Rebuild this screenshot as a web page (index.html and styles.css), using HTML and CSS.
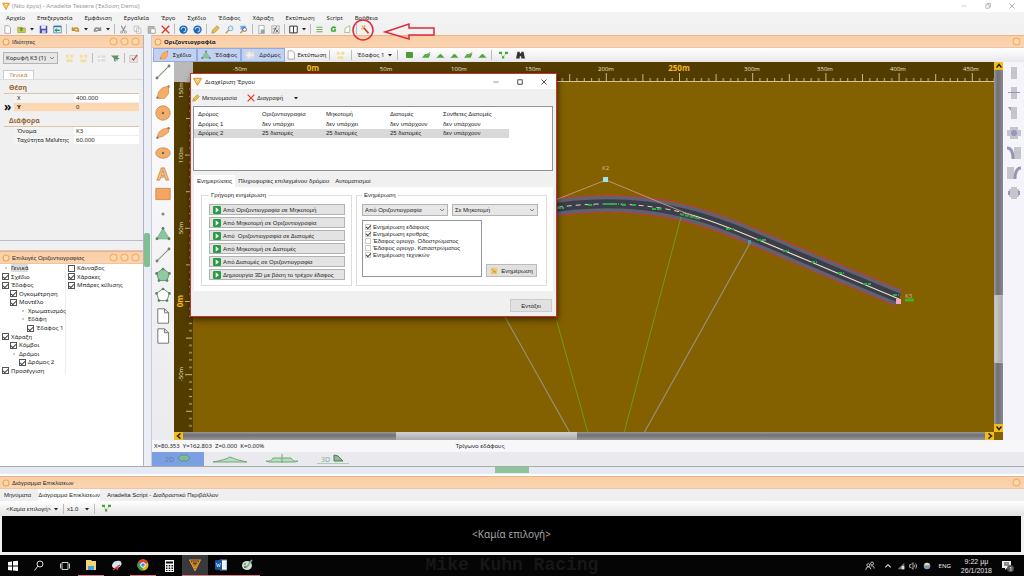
FILE: index.html
```html
<!DOCTYPE html>
<html lang="el">
<head>
<meta charset="utf-8">
<title>Anadelta Tessera</title>
<link rel="stylesheet" href="styles.css">
</head>
<body>
<svg class="defs" aria-hidden="true">
<symbol id="logo" viewBox="0 0 12 12"><path d="M1 2h10L6 11z" fill="#fff0d0" stroke="#eda03c" stroke-width="1.8" stroke-linejoin="round"/><path d="M3 3l3 3 3-3M6 6v4" stroke="#eda03c" fill="none"/></symbol>
<symbol id="doc" viewBox="0 0 12 12"><path d="M2.500 1h5L10 3.500V11h-7.500z" fill="#fff" stroke="#9a9a9a"/></symbol>
<symbol id="open" viewBox="0 0 12 12"><path d="M1 3h4l1 1h5v6H1z" fill="#d9c75c" stroke="#b09a38"/><path d="M4 8V4H2l4-3 4 3H8v4z" fill="#55a83c" transform="translate(1 2) scale(.8)"/></symbol>
<symbol id="save" viewBox="0 0 12 12"><path d="M1 1h10v10H1z" fill="#4c4fb4"/><path d="M3 1h6v4H3z" fill="#eef"/><path d="M4 7h5v4H4z" fill="#ccd"/></symbol>
<symbol id="import" viewBox="0 0 12 12"><path d="M1 1.500h10v9H1z" fill="#e6f2fb" stroke="#3978b0"/><path d="M1 1h10v2H1z" fill="#3978b0"/><path d="M9 6H5V4L2 7l3 3V8h4z" fill="#30984c"/></symbol>
<symbol id="undo" viewBox="0 0 12 12"><path d="M2 3v4h4M2.500 6.500C5 3 10 3 10 8H6" fill="none" stroke="#c79130" stroke-width="2"/></symbol>
<symbol id="redo" viewBox="0 0 12 12"><path d="M10 3v4H6M9.500 6.500C7 3 2 3 2 8h4" fill="none" stroke="#8d8d8d" stroke-width="2"/></symbol>
<symbol id="cut" viewBox="0 0 12 12"><path d="M3 1l4 7M9 1L5 8" stroke="#888" stroke-width="1.400"/><circle cx="3.500" cy="9.500" r="1.500" fill="none" stroke="#888"/><circle cx="8.500" cy="9.500" r="1.500" fill="none" stroke="#888"/></symbol>
<symbol id="copy" viewBox="0 0 12 12"><path d="M1.500 1.500h6v7h-6zM4.500 4h6v7h-6z" fill="#f8f8f8" stroke="#b5b5b5"/></symbol>
<symbol id="paste" viewBox="0 0 12 12"><path d="M1.500 2h8v9h-8z" fill="#b9b9b9" stroke="#999"/><path d="M5 5h6v6H5z" fill="#fff" stroke="#999"/></symbol>
<symbol id="del" viewBox="0 0 12 12"><path d="M1 1l10 10M11 1L1 11" stroke="#e03428" stroke-width="1.800"/></symbol>
<symbol id="sphere" viewBox="0 0 12 12"><circle cx="6" cy="6" r="5.500" fill="#1c66b4"/><path d="M3 6a3 3 0 1 1 3 3" fill="none" stroke="#a6d3f8" stroke-width="1.500"/></symbol>
<symbol id="pencil" viewBox="0 0 12 12"><path d="M1 11l1-4 6-6 3 3-6 6z" fill="#e9bd48" stroke="#a5822f" stroke-width=".8"/></symbol>
<symbol id="lens" viewBox="0 0 12 12"><path d="M6 6l-5 5" stroke="#d79545" stroke-width="2"/><circle cx="7.500" cy="4.500" r="3.200" fill="#d7ecfb" stroke="#5e9ecb"/></symbol>
<symbol id="flag" viewBox="0 0 12 12"><path d="M2 1h7v5H2z" fill="#6fa7dd"/><path d="M6 6l-4 5" stroke="#d79545" stroke-width="2"/><circle cx="7.500" cy="6" r="2.500" fill="#dff" stroke="#447"/></symbol>
<symbol id="save2" viewBox="0 0 12 12"><path d="M2.500.5h7v11h-7z" fill="#fff" stroke="#999"/><path d="M5 6h5v5H5z" fill="#8aa"/></symbol>
<symbol id="fx" viewBox="0 0 12 12"><path d="M1 1h10v10H1z" fill="#e6e6e6" stroke="#aaa"/><path d="M3 10c2 0 2-7 5-8M3 5h4M6 6l4 4M10 6l-4 4" fill="none" stroke="#555"/></symbol>
<symbol id="cols" viewBox="0 0 12 12"><path d="M1 1.500h10v9H1zM6 1.500v9" fill="#fff" stroke="#333" stroke-width="1.300"/></symbol>
<symbol id="list" viewBox="0 0 12 12"><path d="M2 3h8M2 6h8M2 9h8" stroke="#69a854" stroke-width="1.600"/></symbol>
<symbol id="refresh" viewBox="0 0 12 12"><path d="M1 1h10v10H1z" fill="#e7f2e0"/><path d="M9 4C5 1 2 5 4 8h4V5" stroke="#45a43a" fill="none" stroke-width="2"/></symbol>
<symbol id="page" viewBox="0 0 12 12"><path d="M3 4l6-3v9H2z" fill="#f5fff0" stroke="#8cba7c"/></symbol>
<symbol id="wand" viewBox="0 0 12 12"><path d="M3 3l7 8" stroke="#c5472e" stroke-width="2.500"/><path d="M1 1l3 3M5 0v3M0 5h3" stroke="#efa83f" stroke-width="1.500"/></symbol>
<symbol id="ring" viewBox="0 0 12 12"><circle cx="6" cy="6" r="4.500" fill="#fbdcae" stroke="#f0a356" stroke-width="1.600"/></symbol>
<symbol id="tri" viewBox="0 0 20 20"><path d="M10 3L2 16h16z" fill="#8bc79a" stroke="#72a981"/><g fill="#5f8066"><circle cx="10" cy="3" r="1.800"/><circle cx="2.500" cy="16" r="1.800"/><circle cx="17.500" cy="16" r="1.800"/></g></symbol>
<symbol id="quarter" viewBox="0 0 20 20"><path d="M3 18C3 8 9 3 17 3v9l-5 6z" fill="#f5ad67" stroke="#d98e48"/><g fill="#8a8378"><circle cx="3" cy="17" r="1.500"/><circle cx="17" cy="3" r="1.500"/></g></symbol>
<symbol id="arc" viewBox="0 0 20 20"><path d="M3 16C3 8 9 4 17 4v5L10 14z" fill="#f5ad67" stroke="#d98e48"/><g fill="#8a8378"><circle cx="3" cy="16" r="1.500"/><circle cx="17" cy="4" r="1.500"/></g></symbol>
<symbol id="line" viewBox="0 0 20 20"><path d="M2 18L18 2" stroke="#7e9a78" stroke-width="1.300"/><g fill="#727d6e"><circle cx="2.500" cy="17.500" r="1.800"/><circle cx="17.500" cy="2.500" r="1.800"/></g></symbol>
<symbol id="penta" viewBox="0 0 20 20"><path d="M10 2l8 6-3 9H5L2 8z" stroke="#6a8d70" stroke-width="1.200"/><g fill="#5f8066"><circle cx="10" cy="2.500" r="1.700"/><circle cx="18" cy="8" r="1.700"/><circle cx="15" cy="17" r="1.700"/><circle cx="5" cy="17" r="1.700"/><circle cx="2" cy="8" r="1.700"/></g></symbol>
<symbol id="sheet" viewBox="0 0 20 20"><path d="M3.500 1h8.500L17 6V19H3.500zM12 1v5h5" fill="#fff" stroke="#727272" stroke-width="1.200"/></symbol>
<symbol id="hill" viewBox="0 0 12 12"><path d="M0 9c3-1 4-5 6-5s3 4 6 5z" fill="#54a23e"/></symbol>
<symbol id="hill2" viewBox="0 0 12 12"><path d="M0 9l4-5h7L9 9z" fill="#58a842"/><path d="M5 6l6-4" stroke="#7ab662" stroke-width="1.500"/></symbol>
<symbol id="dots" viewBox="0 0 12 12"><path d="M2 2l3 6 5-5" fill="none" stroke="#8ac57b"/><g fill="#4da23f"><path d="M0 1h4v3H0zM4 7h3v3H4zM8 1h4v3H8z"/></g></symbol>
<symbol id="binoc" viewBox="0 0 12 12"><path d="M2 1h3v2h2V1h3l2 9H7V7H5v3H0z" fill="#333"/></symbol>
<symbol id="play" viewBox="0 0 12 12"><rect width="12" height="12" rx="2" fill="#259b43"/><path d="M4 2v8l5-4z" fill="#fff"/></symbol>
<symbol id="sun" viewBox="0 0 12 12"><path d="M1 1h4v4H1zM7 1h4v4H7zM2 7h8v4H2z" fill="#f3dfa2"/></symbol>
<symbol id="grid" viewBox="0 0 12 12"><path d="M1 2h10v8H1z" fill="#dcdcdc"/><path d="M1 6h10M5 2v8" stroke="#fff"/></symbol>
<symbol id="filter" viewBox="0 0 12 12"><path d="M0 2h11L6 7v4L4 9V6z" fill="#758575"/><path d="M5 6h6M8 3v6" stroke="#34a04a" stroke-width="1.500"/></symbol>
<symbol id="check" viewBox="0 0 12 12"><path d="M1 2h10v9H1z" fill="#e9e9e9" stroke="#bbb"/><path d="M4 6l2 2 5-7" stroke="#cb4c42" fill="none" stroke-width="1.600"/></symbol>
<symbol id="chev" viewBox="0 0 12 12"><path d="M2 4l4 4 4-4" fill="none" stroke="#666" stroke-width="1.500"/></symbol>
<symbol id="caret" viewBox="0 0 12 12"><path d="M2 4h8L6 9z" fill="#222"/></symbol>
<symbol id="mini" viewBox="0 0 12 12"><path d="M1 6h10" stroke="currentColor"/></symbol>
<symbol id="max" viewBox="0 0 12 12"><path d="M1.500 1.500h9v9h-9z" fill="none" stroke="currentColor" stroke-width="1.600"/></symbol>
<symbol id="restore" viewBox="0 0 12 12"><path d="M1.500 3.500h7v7h-7zM4 3V1h7v7H9" fill="none" stroke="currentColor" stroke-width="1.300"/></symbol>
<symbol id="x" viewBox="0 0 12 12"><path d="M1 1l10 10M11 1L1 11" stroke="currentColor" stroke-width="1.600"/></symbol>
</svg>

<header class="titlebar"><svg class="i8"><use href="#logo"/></svg><span>(Νέο έργο) - Anadelta Tessera (Έκδοση Demo)</span>
<div class="winbtns"><button aria-label="Ελαχιστοποίηση"><svg class="i6"><use href="#mini"/></svg></button><button aria-label="Επαναφορά"><svg class="i6"><use href="#restore"/></svg></button><button aria-label="Κλείσιμο"><svg class="i6"><use href="#x"/></svg></button></div></header>
<nav class="menubar"><button>Αρχείο</button><button>Επεξεργασία</button><button>Εμφάνιση</button><button>Εργαλεία</button><button>Έργο</button><button>Σχέδιο</button><button>Έδαφος</button><button>Χάραξη</button><button>Εκτύπωση</button><button>Script</button><button>Βοήθεια</button></nav>
<div class="toolbar">
<button class="t" aria-label="Νέο"><svg class="i9"><use href="#doc"/></svg></button><button class="t" aria-label="Άνοιγμα"><svg class="i9"><use href="#open"/></svg></button><button class="c" aria-label="Πρόσφατα"><svg class="i6"><use href="#caret"/></svg></button><button class="t" aria-label="Αποθήκευση"><svg class="i9"><use href="#save"/></svg></button><button class="t" aria-label="Εισαγωγή"><svg class="i9"><use href="#import"/></svg></button><i class="s"></i>
<button class="t" aria-label="Αναίρεση"><svg class="i9"><use href="#undo"/></svg></button><button class="c" aria-label="Λίστα αναίρεσης"><svg class="i6"><use href="#caret"/></svg></button><button class="t" aria-label="Επανάληψη"><svg class="i9"><use href="#redo"/></svg></button><button class="c" aria-label="Λίστα επανάληψης"><svg class="i6"><use href="#caret"/></svg></button><i class="s"></i>
<button class="t" aria-label="Αποκοπή"><svg class="i9"><use href="#cut"/></svg></button><button class="t" aria-label="Αντιγραφή"><svg class="i9"><use href="#copy"/></svg></button><button class="t" aria-label="Επικόλληση"><svg class="i9"><use href="#paste"/></svg></button><button class="t" aria-label="Διαγραφή"><svg class="i9"><use href="#del"/></svg></button><i class="s"></i>
<button class="t" aria-label="Προηγούμενο"><svg class="i9"><use href="#sphere"/></svg></button><button class="t" aria-label="Επόμενο"><svg class="i9"><use href="#sphere"/></svg></button><i class="s"></i>
<button class="t" aria-label="Μολύβι"><svg class="i9"><use href="#pencil"/></svg></button><button class="t" aria-label="Εστίαση"><svg class="i9"><use href="#lens"/></svg></button><button class="t" aria-label="Εστίαση παραθύρου"><svg class="i9"><use href="#flag"/></svg></button><i class="s"></i>
<button class="t" aria-label="Έγγραφο"><svg class="i9"><use href="#save2"/></svg></button><button class="t" aria-label="Συναρτήσεις"><svg class="i9"><use href="#fx"/></svg></button><i class="s"></i>
<button class="t" aria-label="Παράθυρα"><svg class="i9"><use href="#cols"/></svg></button><button class="c" aria-label="Διάταξη"><svg class="i6"><use href="#caret"/></svg></button><i class="s"></i>
<button class="t" aria-label="Λίστα"><svg class="i9"><use href="#list"/></svg></button><button class="t" aria-label="Ανανέωση"><svg class="i9"><use href="#refresh"/></svg></button><button class="t" aria-label="Σελίδα"><svg class="i9"><use href="#page"/></svg></button><i class="s"></i><button class="t" aria-label="Διαχείριση έργου"><svg class="i9"><use href="#wand"/></svg></button>
<svg class="callout" aria-hidden="true"><circle cx="11" cy="11" r="10"/><path d="M33 13l24-8v4h25v7H57v4z"/></svg>
</div>

<main class="main">
<aside class="left">
<section class="props">
<h2 class="bar"><svg class="i8"><use href="#ring"/></svg>Ιδιότητες<span class="rings"><svg class="i9"><use href="#ring"/></svg><svg class="i9"><use href="#ring"/></svg><svg class="i9"><use href="#ring"/></svg></span></h2>
<div class="proptools"><span class="sel sel-obj"><select aria-label="Αντικείμενο"><option>Κορυφή K3 (1)</option></select><svg class="i6"><use href="#chev"/></svg></span>
<button class="t" aria-label="Κατηγορίες"><svg class="i9"><use href="#sun"/></svg></button><button class="t" aria-label="Ταξινόμηση"><svg class="i9"><use href="#sun"/></svg></button><i class="s"></i><button class="t" aria-label="Πίνακας"><svg class="i9"><use href="#grid"/></svg></button><button class="t" aria-label="Φίλτρο"><svg class="i9"><use href="#filter"/></svg></button><i class="s"></i><button class="t" aria-label="Έλεγχος"><svg class="i9"><use href="#check"/></svg></button></div>
<div class="ptabs"><button>Γενικά</button></div>
<h3>Θέση</h3>
<dl><div><dt>X</dt><dd>400.000</dd></div><div class="cur"><dt><b>Y</b></dt><dd>0</dd></div></dl>
<h3>Διάφορα</h3>
<dl><div><dt>Όνομα</dt><dd>K3</dd></div><div><dt>Ταχύτητα Μελέτης</dt><dd>60.000</dd></div></dl>
</section>
<section class="opts">
<h2 class="bar"><svg class="i8"><use href="#ring"/></svg>Επιλογές Οριζοντιογραφίας<span class="rings"><svg class="i9"><use href="#ring"/></svg><svg class="i9"><use href="#ring"/></svg><svg class="i9"><use href="#ring"/></svg></span></h2>
<div class="trees">
<div class="tree">
<span class="leaf"><mark>Γενικά</mark></span>
<label><input type="checkbox" checked>Σχέδιο</label>
<label><input type="checkbox" checked>Έδαφος</label>
<label class="l1"><input type="checkbox" checked>Ογκομέτρηση</label>
<label class="l1"><input type="checkbox" checked>Μοντέλο</label>
<span class="leaf l2">Χρωματισμός</span>
<span class="leaf l2">Εδάφη</span>
<label class="l3"><input type="checkbox" checked>Έδαφος 1</label>
<label><input type="checkbox" checked>Χάραξη</label>
<label class="l1"><input type="checkbox" checked>Κόμβοι</label>
<span class="leaf l1">Δρόμοι</span>
<label class="l2"><input type="checkbox" checked>Δρόμος 2</label>
<label><input type="checkbox" checked>Προσέγγιση</label>
</div>
<div class="tree tree2">
<label><input type="checkbox">Κάνναβος</label>
<label><input type="checkbox" checked>Χάρακες</label>
<label><input type="checkbox" checked>Μπάρες κύλισης</label>
</div>
</div>
</section>
</aside>
<div class="vsplit"><i></i></div>
<section class="work">
<h2 class="bar"><svg class="i8"><use href="#ring"/></svg><b>Οριζοντιογραφία</b><span class="rings"><svg class="i9"><use href="#ring"/></svg></span></h2>
<div class="worktools">
<button class="mode"><svg class="i10"><use href="#quarter"/></svg>Σχέδιο</button><button class="mode"><svg class="i10"><use href="#tri"/></svg>Έδαφος</button><button class="mode"><svg class="i10"><use href="#grid"/></svg>Δρόμος</button>
<button class="print"><svg class="i10"><use href="#doc"/></svg>Εκτύπωση</button><i class="s"></i><button class="t wide" aria-label="Εικόνα"><svg class="i9"><use href="#sun"/></svg></button><i class="s"></i>
<span class="sel flat sel-ground"><select aria-label="Έδαφος"><option>Έδαφος 1</option></select><svg class="i6"><use href="#caret"/></svg></span><i class="s"></i>
<button class="t wide2" aria-label="Κύβος"><svg class="i8"><rect x="1" y="1" width="7" height="6" rx="1" fill="#4f9a38"/></svg></button><button class="t" aria-label="Νέο έδαφος"><svg class="i9"><use href="#hill2"/></svg></button><button class="t" aria-label="Ισοϋψείς"><svg class="i9"><use href="#hill"/></svg></button><button class="t" aria-label="Πρανές"><svg class="i9"><use href="#hill"/></svg></button><button class="t" aria-label="Επεξεργασία εδάφους"><svg class="i9"><use href="#hill2"/></svg></button><button class="t" aria-label="Κορυφή"><svg class="i9"><use href="#hill"/></svg></button><i class="s"></i>
<button class="t wide2" aria-label="Τριγωνισμός"><svg class="i9"><use href="#dots"/></svg></button><button class="t" aria-label="Εύρεση"><svg class="i9"><use href="#binoc"/></svg></button>
</div>
<div class="stage">
<div class="palette">
<button aria-label="Γραμμή"><svg class="i16"><use href="#line"/></svg></button>
<button aria-label="Τόξο"><svg class="i16"><use href="#quarter"/></svg></button>
<button aria-label="Κύκλος"><svg class="i16" viewBox="0 0 20 20"><circle cx="10" cy="10" r="9" fill="#f5ad67" stroke="#b58a5c"/><circle cx="10" cy="10" r="1.500" fill="#666"/></svg></button>
<button aria-label="Ελλειπτικό τόξο"><svg class="i16"><use href="#arc"/></svg></button>
<button aria-label="Έλλειψη"><svg class="i16" viewBox="0 0 20 20"><ellipse cx="10" cy="10" rx="9" ry="6.500" fill="#f5ad67" stroke="#b58a5c"/><circle cx="10" cy="10" r="1.500" fill="#666"/></svg></button>
<button aria-label="Κείμενο"><svg class="a20"><text x="10" y="16" class="glyph">A</text></svg></button>
<button aria-label="Ορθογώνιο"><svg class="i16" viewBox="0 0 20 20"><path d="M1 3h18v14H1z" fill="#f5a560" stroke="#c4844a"/></svg></button>
<button aria-label="Σημείο"><svg class="i16" viewBox="0 0 20 20"><circle cx="10" cy="10" r="2" fill="#74957b"/></svg></button>
<button aria-label="Τρίγωνο"><svg class="i16"><use href="#tri"/></svg></button>
<button aria-label="Ευθεία"><svg class="i16"><use href="#line"/></svg></button>
<button aria-label="Πολύγωνο"><svg class="i16" fill="#8fcb9e"><use href="#penta"/></svg></button>
<button aria-label="Περίγραμμα"><svg class="i16" fill="#fff"><use href="#penta"/></svg></button>
<button aria-label="Φύλλο"><svg class="i16"><use href="#sheet"/></svg></button>
<button aria-label="Νέο φύλλο"><svg class="i16"><use href="#sheet"/></svg></button>
</div>
<div class="view">
<svg class="plan" role="img" aria-label="Οριζοντιογραφία δρόμου">
<defs>
<pattern id="hticks" x="139" y="0" width="73.2" height="20" patternUnits="userSpaceOnUse"><path d="M.5 11v8M37.100 12v7M7.800 16v3M15.100 16v3M22.400 16v3M29.700 16v3M44.400 16v3M51.700 16v3M59 16v3M66.400 16v3" stroke="#d9c69b" stroke-width=".9"/></pattern>
<pattern id="vticks" x="0" y="239" width="19" height="73.2" patternUnits="userSpaceOnUse"><path d="M11 .5h8M12 37.100h7M15 7.800h4M15 15.100h4M15 22.400h4M15 29.700h4M15 44.400h4M15 51.700h4M15 59h4M15 66.400h4" stroke="#d9c69b" stroke-width=".9"/></pattern>
<path id="axis" d="M540 210C590 201 640 202 685 213S760 241 899 298"/>
</defs>
<rect width="100%" height="20" fill="#523c00"/><rect width="100%" height="19" fill="url(#hticks)"/><path d="M0 19.500h2000" stroke="#d9c69b"/>
<rect y="20" width="19" height="100%" fill="#523c00"/><rect y="20" width="18" height="100%" fill="url(#vticks)"/>
<rect width="19" height="20" fill="#b9b9b9"/>
<g class="rl"><text x="66" y="9">-50m</text><text x="139" y="9" class="big">0m</text><text x="212" y="9">50m</text><text x="285" y="9">100m</text><text x="359" y="9">150m</text><text x="432" y="9">200m</text><text x="505" y="9" class="big">250m</text><text x="578" y="9">300m</text><text x="651" y="9">350m</text><text x="724" y="9">400m</text><text x="797" y="9">450m</text></g>
<g class="rl"><text transform="translate(9 28) rotate(-90)">150m</text><text transform="translate(9 93) rotate(-90)">100m</text><text transform="translate(9 166) rotate(-90)">50m</text><text class="big" transform="translate(9 239) rotate(-90)">0m</text><text transform="translate(9 312) rotate(-90)">-50m</text></g>
<g transform="translate(-174 -62)" fill="none">
<use href="#axis" class="edge"/><use href="#axis" class="asphalt"/><use href="#axis" class="lane"/>
<path d="M505 317L570 433M750 243L644 433" stroke="#94907a" stroke-width="1.200"/>
<path d="M557 322L588 433M681 217L624 433" stroke="#709b13"/>
<path d="M540 210C590 201 640 202 685 213" stroke="#d8d3cf" stroke-dasharray="5 4"/><path d="M685 213C728 225 760 241 899 299" stroke="#eee2c4" stroke-width="1.200"/>
<path d="M540 206L606 180L700 219" stroke="#c39375"/>
<path d="M557 208h7M588 205h6M603 204h16M622 205h4M632 205h5M652 209h10M680 214l20 5M726 229h8M757 240h10M783 251h6M811 262h6M838 273h6M863 284h8M893 295h6" stroke="#29ad48" stroke-width="2" stroke-dasharray="4 1"/>
<path d="M603 177h5v5h-5z" fill="#9ee4ec"/><path d="M748 240h3v4h-3z" fill="#4a9aa0"/><path d="M896 299h5v5h-5z" fill="#f0a8cc"/><path d="M905 300h9" stroke="#3eb326" stroke-width="3"/>
<text x="602" y="170" class="pt">K2</text><text x="905" y="298" class="pt">K3</text>
</g>
</svg>
<div class="vscroll"><button aria-label="Πάνω"><svg class="i6" viewBox="0 0 12 12"><path d="M1 9l5-6 5 6"/></svg></button><i></i><button aria-label="Κάτω"><svg class="i6" viewBox="0 0 12 12"><path d="M1 3l5 6 5-6"/></svg></button></div>
<div class="hscroll"><button aria-label="Αριστερά"><svg class="i6" viewBox="0 0 12 12"><path d="M9 1L3 6l6 5"/></svg></button><i></i><button aria-label="Δεξιά"><svg class="i6" viewBox="0 0 12 12"><path d="M3 1l6 5-6 5"/></svg></button></div>
</div>
<div class="rightstrip">
<button aria-label="Όψη"><svg class="i14"><path d="M4 1h6v12H4z"/></svg></button>
<button aria-label="Τομή"><svg class="i14"><path d="M4 1h6v12H4z"/><path class="p" d="M1 6h12v1H1z"/></svg></button>
<button aria-label="Άκρο"><svg class="i14"><path d="M4 1h6v12H4z"/><path class="p" d="M1 1h3v4z"/></svg></button>
<button aria-label="Κέντρο"><svg class="i14"><path d="M3 1h8v12H3zM0 4h14v6H0z"/><circle class="p" cx="7" cy="7" r="3"/></svg></button>
<button aria-label="Στροφή αριστερά"><svg class="i14"><path d="M7 1h7v12H7z"/><path class="q" d="M0 2q6 0 6 11"/></svg></button>
<button aria-label="Στροφή δεξιά"><svg class="i14"><path d="M0 1h7v12H0z"/><path class="q" d="M14 2q-6 0-6 11"/></svg></button>
<button aria-label="Πλάτος"><svg class="i14"><path d="M4 1h6v12H4zM2 3h10v8H2z"/><path class="p" d="M1 5h2v4H1zM11 5h2v4h-2z"/></svg></button>
</div>
</div>
<div class="status"><span>X=80.353&nbsp; Y=162.803&nbsp; Z=0.000&nbsp; K=0.00%</span><span class="msg">Τρίγωνο εδάφους</span></div>
<div class="views">
<button class="on" aria-label="2D"><svg><text x="12" y="9">2D</text><path d="M25 5l3-3h6l3 3-3 3h-6z" fill="#7fb79a" stroke="#63938a"/></svg></button>
<button aria-label="Μηκοτομή"><svg><path d="M8 9q12-2 17-5q6 3 17 5z" fill="#b6dfbd" stroke="#75a77c"/></svg></button>
<button aria-label="Διατομή"><svg><path d="M9 8q5 1 7-3h18q2 4 7 3l-3 1H12z" fill="#b6dfbd" stroke="#75a77c"/><path d="M25 1v9" stroke="#75a77c"/></svg></button>
<button aria-label="3D"><svg><text x="12" y="9">3D</text><path d="M25 8V2l4 1 5 5z" fill="#8cba94" stroke="#56725a"/><path d="M8 10.500h32" stroke="#a9d0af"/></svg></button>
</div>
</section>
</main>

<div class="hsplit"><i></i></div>
<h2 class="bar dockbar"><svg class="i8"><use href="#ring"/></svg>Διάγραμμα Επικλίσεων<span class="rings"><svg class="i9"><use href="#ring"/></svg></span></h2>
<div class="docktabs"><button>Μηνύματα</button><button class="on">Διάγραμμα Επικλίσεων</button><button>Anadelta Script - Διαδραστικό Περιβάλλον</button></div>
<div class="docktools"><span class="sel flat sel-none"><select aria-label="Επιλογή"><option>&lt;Καμία επιλογή&gt;</option></select><svg class="i6"><use href="#caret"/></svg></span><i class="s"></i><span class="sel flat sel-x"><select aria-label="Κλίμακα"><option>x1.0</option></select><svg class="i6"><use href="#caret"/></svg></span><i class="s"></i><button class="t wide2" aria-label="Σημεία"><svg class="i9"><use href="#dots"/></svg></button></div>
<div class="diagram">&lt;Καμία επιλογή&gt;</div>
<footer class="taskbar">
<span class="wall">Mike Kuhn Racing</span>
<button aria-label="Έναρξη"><svg class="i12"><path d="M1 2l4-.5V5.500H1zM6 1.300L11 .8v4.700H6zM1 6.500h4v4L1 10zM6 6.500h5V11l-5-.5z" fill="#fff"/></svg></button>
<button aria-label="Αναζήτηση"><svg class="i12"><circle cx="7" cy="4" r="3" fill="none" stroke="#ddd"/><path d="M5 6L1.500 10.500" stroke="#ddd"/></svg></button>
<button aria-label="Προβολή εργασιών"><svg class="i12"><path d="M3 2.500h6v7H3zM1.500 3.500v5M10.500 3.500v5" fill="none" stroke="#ccc"/></svg></button>
<button class="run" aria-label="Εξερεύνηση"><svg class="i12"><path d="M1 1h5l1 1h4v9H1z" fill="#f2d675"/><path d="M3 7h6v4H3z" fill="#46a2dd"/></svg></button>
<button aria-label="Αποκόμματα"><svg class="i12"><ellipse cx="6" cy="4.500" rx="5" ry="3.500" fill="#d9e1f0" transform="rotate(-25 6 5)"/><path d="M2 10l7-5M6 10l1-4" stroke="#d4453c" stroke-width="1.500"/></svg></button>
<button class="run" aria-label="Chrome"><svg class="i12"><circle cx="6" cy="6" r="5.500" fill="#e3b61c"/><path d="M1 3.500A5.500 5.500 0 0 1 11 3.500L6 6z" fill="#dc4437"/><path d="M1 3.500A5.500 5.500 0 0 0 5 11.500L7 6z" fill="#35a353"/><circle cx="6" cy="6" r="2.300" fill="#438af0" stroke="#fff"/></svg></button>
<button aria-label="Αριθμομηχανή"><svg class="i12"><path d="M2 0h9v12H2z" fill="#f5f5f5"/><path d="M3 1.500h7v2H3zM3 5h1.500v1.500H3zM5.700 5h1.500v1.500H5.700zM8.500 5H10v1.500H8.500zM3 7.500h1.500V9H3zM5.700 7.500h1.500V9H5.700zM8.500 7.500H10V9H8.500zM3 10h1.500v1H3zM5.700 10h1.500v1H5.700zM8.500 10H10v1H8.500z" fill="#111"/></svg></button>
<button class="run active" aria-label="Tessera"><svg class="i12" viewBox="0 0 12 12"><path d="M.7 1h10.600L6 11.500z" fill="#52310c" stroke="#e39a3a" stroke-width="1.200"/><path d="M3 3h6L6 9zM6 5v4" fill="none" stroke="#e39a3a"/></svg></button>
<button class="run" aria-label="Word"><svg class="i12"><path d="M5 1h7v10H5z" fill="#fff" stroke="#5b8bd0"/><path d="M0 1.500L7 .5v11L0 10.500z" fill="#1d55a5"/><path d="M1.500 4l1 4 1-3 1 3 1-4M8 4h3M8 6h3M8 8h3" stroke="#cfe0f7" fill="none" stroke-width=".8"/></svg></button>
<button class="run" aria-label="Ζωγραφική"><svg class="i12"><ellipse cx="6" cy="6.500" rx="5" ry="4.500" fill="#d7ddcf"/><path d="M5 9l6-8" stroke="#6fb1a0" stroke-width="1.500"/><circle cx="4" cy="5" r="1" fill="#5a9e5d"/><circle cx="4" cy="8" r="1" fill="#555"/></svg></button>
<div class="tray">
<svg class="i10" viewBox="0 0 12 12" fill="none" stroke="#ddd"><circle cx="4" cy="5" r="1.800"/><circle cx="8.500" cy="3" r="1.800"/><path d="M1 11q0-4 3-4t3 3M7 6q4-1 4 3"/></svg>
<svg class="i8 up" viewBox="0 0 12 12" fill="none" stroke="#eee" stroke-width="1.600"><path d="M2 8l4-4 4 4"/></svg>
<svg class="i8" viewBox="0 0 12 12"><path d="M1 11L11 1v10z" fill="#777"/><path d="M7 6h4v5H7z" fill="#ddd"/></svg>
<svg class="i8" viewBox="0 0 12 12" fill="none" stroke="#eee"><path d="M1 4h2l3-3v10L3 8H1zM8 4q2 2 0 4M10 2q3 4 0 8"/></svg>
<svg class="i8 orb" viewBox="0 0 12 12"><circle cx="6" cy="6" r="5" fill="#8097bd"/><path d="M2 5a4 4 0 0 1 8 0z" fill="#f2dc88"/></svg>
<span class="lang">ENG</span><time>9:22 μμ<br>26/1/2018</time>
<svg class="i12 note"><path d="M0 1h9v7H5L3 10V8H0z" fill="#eee"/><path d="M2 3h5M2 5h5" stroke="#333"/><circle cx="8.500" cy="8.500" r="3.500" fill="#555"/><text x="7" y="11">1</text></svg>
</div>
</footer>

<div class="dialog" role="dialog" aria-labelledby="dlg">
<div class="dtitle"><svg class="i9"><use href="#logo"/></svg><span id="dlg">Διαχείριση Έργου</span><div class="winbtns"><button aria-label="Ελαχιστοποίηση"><svg class="i6"><use href="#mini"/></svg></button><button aria-label="Μεγιστοποίηση"><svg class="i6"><use href="#max"/></svg></button><button aria-label="Κλείσιμο"><svg class="i6"><use href="#x"/></svg></button></div></div>
<div class="dtools"><button><svg class="i8"><use href="#pencil"/></svg>Μετονομασία</button><button><svg class="i8"><use href="#del"/></svg>Διαγραφή</button><button aria-label="Περισσότερα"><svg class="i6"><use href="#caret"/></svg></button></div>
<div class="roads"><table>
<colgroup><col class="w64"><col class="w64"><col class="w64"><col class="w53"><col></colgroup>
<thead><tr><th>Δρόμος</th><th>Οριζοντιογραφία</th><th>Μηκοτομή</th><th>Διατομές</th><th>Σύνθετες Διατομές</th></tr></thead>
<tbody><tr><td>Δρόμος 1</td><td>δεν υπάρχει</td><td>δεν υπάρχει</td><td>δεν υπάρχουν</td><td>δεν υπάρχουν</td></tr>
<tr class="hit"><td>Δρόμος 2</td><td>25 διατομές</td><td>25 διατομές</td><td>25 διατομές</td><td>δεν υπάρχουν</td></tr></tbody></table></div>
<div class="dtabs"><button class="on">Ενημερώσεις</button><button>Πληροφορίες επιλεγμένου δρόμου</button><button>Αυτοματισμοί</button></div>
<div class="dpage">
<fieldset class="quick"><legend>Γρήγορη ενημέρωση</legend>
<div class="stack">
<button><svg class="i8"><use href="#play"/></svg>Από Οριζοντιογραφία σε Μηκοτομή</button>
<button><svg class="i8"><use href="#play"/></svg>Από Μηκοτομή σε Οριζοντιογραφία</button>
<button><svg class="i8"><use href="#play"/></svg>Από&nbsp; Οριζοντιογραφία σε Διατομές</button>
<button><svg class="i8"><use href="#play"/></svg>Από Μηκοτομή σε Διατομές</button>
<button><svg class="i8"><use href="#play"/></svg>Από Διατομές σε Οριζοντιογραφία</button>
<button><svg class="i8"><use href="#play"/></svg>Δημιουργία 3D με βάση το τρέχον έδαφος</button>
</div>
</fieldset>
<fieldset class="upd"><legend>Ενημέρωση</legend>
<div class="row"><span class="sel gray"><select aria-label="Από"><option>Από Οριζοντιογραφία</option></select><svg class="i6"><use href="#chev"/></svg></span><span class="sel gray"><select aria-label="Σε"><option>Σε Μηκοτομή</option></select><svg class="i6"><use href="#chev"/></svg></span></div>
<div class="row end"><div class="checks">
<label><input type="checkbox" checked>Ενημέρωση εδάφους</label>
<label><input type="checkbox" checked>Ενημέρωση ερυθράς</label>
<label><input type="checkbox">Έδαφος οριογρ. Οδοστρώματος</label>
<label><input type="checkbox">Έδαφος οριογρ. Καταστρώματος</label>
<label><input type="checkbox" checked>Ενημέρωση τεχνικών</label>
</div><button class="go"><svg class="i8" viewBox="0 0 12 12"><path d="M1 1h10v10H1z" fill="#f1cb72"/><path d="M3 3l6 6M4 8l5-2" stroke="#b97d1f"/></svg>Ενημέρωση</button></div>
</fieldset>
</div>
<div class="dfoot"><button>Εντάξει</button></div>
</div>
</body>
</html>
```
FILE: styles.css
```css
* { box-sizing: border-box; }
body { margin: 0; height: 100vh; display: flex; flex-direction: column; overflow: hidden; position: relative; background: #f0f0f0; color: #222; font: 6px/8px "Noto Sans", "Open Sans", sans-serif; }
button, select, input { font: inherit; color: inherit; margin: 0; padding: 0; border: 0; background: none; }
button { display: flex; align-items: center; justify-content: center; white-space: nowrap; }
svg { display: block; flex: none; }
h2, h3, dl, dd { margin: 0; font-weight: normal; font-size: 6px; }
.defs { position: absolute; width: 0; height: 0; }
.i6 { width: 6px; height: 6px; } .i8 { width: 8px; height: 8px; } .i9 { width: 9px; height: 9px; } .i10 { width: 10px; height: 10px; }
.i12 { width: 12px; height: 12px; } .i14 { width: 14px; height: 14px; } .i16 { width: 16px; height: 16px; }

.titlebar { display: flex; align-items: center; height: 12px; background: #fff; color: #999; padding-left: 2px; gap: 2px; }
.winbtns { margin-left: auto; display: flex; }
.winbtns button { width: 24px; height: 12px; }
.menubar { display: flex; height: 11px; padding-left: 6px; gap: 12px; background: #f3f3f3; }
.toolbar { display: flex; align-items: center; height: 12px; position: relative; background: #f1f1f1; }
.t { width: 14px; height: 12px; flex: none; } .c { width: 8px; flex: none; }
.wide { width: 18px; } .wide2 { width: 20px; }
.s { width: 1px; height: 10px; background: #bbb; margin: 0 1px 0 2px; flex: none; }
.callout { position: absolute; left: 352px; top: -4px; width: 84px; height: 24px; fill: none; stroke: #df2a3c; stroke-width: 1.500px; z-index: 2; }

.bar { display: flex; align-items: center; height: 13px; gap: 2px; padding: 0 3px 0 2px; font-family: "Liberation Sans", sans-serif; background: linear-gradient(#f9d0a6, #fad4b2); border-top: 1px solid #efb287; border-bottom: 1px solid #f3c49c; }
.bar b { font-family: "Noto Sans", sans-serif; }
.rings { margin-left: auto; display: flex; gap: 2px; opacity: .7; }
.main { flex: 1; min-height: 0; display: flex; border-bottom: 1px solid #aaa; }
.left { width: 144px; flex: none; display: flex; flex-direction: column; border-right: 1px solid #aeb4c4; }
.props { height: 206px; border-bottom: 1px solid #b6bccb; background: #f0f0f0; }
.proptools { display: flex; align-items: center; height: 20px; padding: 0 3px; }
.sel { position: relative; display: flex; align-items: center; border: 1px solid #b4b4b4; background: #e6e6e6; height: 12px; }
.sel select { appearance: none; width: 100%; height: 100%; padding: 0 2px; outline: 0; }
.sel svg { position: absolute; right: 2px; pointer-events: none; }
.sel-obj { width: 55px; margin-right: 4px; }
.sel.flat { border: 0; background: none; }
.ptabs { display: flex; padding: 2px 3px 0; border-bottom: 1px solid #ddd; height: 12px; margin-bottom: 3px; }
.ptabs button { background: #fff; border: 1px solid #ccc; border-bottom: 0; padding: 0 6px; color: #b98147; }
.props h3 { margin: 0 4px; height: 11px; font: bold 7px/10px "Noto Sans", sans-serif; color: #9a6a35; padding-left: 5px; border-bottom: 1px solid #ddc3a8; }
.props dl { margin: 0 4px 4px 14px; background: #fff; }
.props dl div { display: flex; height: 9px; border-bottom: 1px solid #eee; }
.props dt { width: 60px; padding-left: 3px; background: #f3f3f3; flex: none; white-space: nowrap; }
.props dd { padding-left: 2px; }
.props .cur { background: #fcd7b2; position: relative; }
.props .cur dt { background: #fcd7b2; }
.props .cur::before { content: "»"; position: absolute; left: -10px; font: bold 12px/7px "Noto Sans", sans-serif; color: #111; }
.opts { flex: 1; margin-top: 9px; background: #fff; border-top: 1px solid #ccc; display: flex; flex-direction: column; }
.trees { display: flex; flex: 1; }
.tree { width: 66px; padding-left: 2px; display: grid; grid-template-rows: repeat(13, 1fr); height: 111px; white-space: nowrap; }
.trees .tree { border-right: 1px solid #eee; }
.trees .tree2 { border: 0; width: 76px; }
.tree label, .leaf { display: flex; align-items: center; gap: 2px; }
.leaf::before { content: ""; width: 2px; height: 2px; margin: 0 2px 0 3px; background: #b9b9b9; border-radius: 1px; }
mark { background: #ddd; color: inherit; }
.l1 { padding-left: 8px; } .l2 { padding-left: 17px; } .l3 { padding-left: 25px; }
input[type=checkbox] { appearance: none; width: 7px; height: 7px; border: 1px solid #555; background: #fff; display: grid; place-items: center; flex: none; }
input[type=checkbox]:checked::after { content: ""; width: 4px; height: 2px; border: solid #444; border-width: 0 0 1px 1px; transform: rotate(-45deg); }
.vsplit { width: 8px; flex: none; background: #eceef5; display: flex; align-items: flex-end; border-right: 1px solid #c8ccda; }
.vsplit i { width: 6px; height: 34px; background: #7fc092; border-radius: 2px; margin-bottom: 199px; }

.work { flex: 1; min-width: 0; display: flex; flex-direction: column; background: linear-gradient(#fff, #e9e9ee); }
.worktools { display: flex; align-items: center; height: 14px; background: linear-gradient(#fff, #e8e8ec); padding-left: 1px; }
.mode { width: 44px; height: 14px; gap: 4px; background: #c3d1f0; border: 1px solid #93abe0; }
.print { width: 42px; gap: 2px; }
.sel-ground { width: 42px; padding-left: 2px; }
.stage { flex: 1; min-height: 0; display: flex; }
.palette { width: 22px; flex: none; display: grid; grid-template-rows: repeat(14, 1fr); height: 284px; }
.a20 { width: 20px; height: 20px; }
.glyph { font: bold 17px/17px "Liberation Sans", sans-serif; fill: #fbd0a0; stroke: #dc8e4c; text-anchor: middle; }
.view { flex: 1; min-width: 0; display: grid; grid-template: minmax(0, 1fr) 8px / minmax(0, 1fr) 9px; background: #836000; }
.plan { width: 100%; height: 100%; min-height: 0; background: #836000; }
.rl { font: 6px "Open Sans", sans-serif; fill: #eee5cf; text-anchor: middle; }
.big { font: bold 8px "Open Sans", sans-serif; fill: #f5b81c; }
.pt { font: 6px "Open Sans", sans-serif; fill: #dcb79c; }
.edge { stroke: #c73832; stroke-width: 18px; }
.asphalt { stroke: #62626e; stroke-width: 16px; }
.lane { stroke: #3c3d4b; stroke-width: 9px; }
.vscroll { display: flex; flex-direction: column; background: linear-gradient(90deg, #999, #6f6f77 40%, #888); }
.hscroll { display: flex; background: linear-gradient(#999, #6f6f77 40%, #999); }
.vscroll button, .hscroll button { width: 9px; height: 8px; background: #f4bd19; flex: none; }
.vscroll svg, .hscroll svg { fill: none; stroke: #222; stroke-width: 3px; }
.vscroll i { height: 68px; margin: auto 0 61px; background: linear-gradient(90deg, #c9c9c9, #aaa); border: 1px solid #bbb; }
.hscroll i { flex: 0 0 22%; margin: 0 auto 0 26%; background: linear-gradient(#d0d0d8, #aaa); }
.rightstrip { width: 21px; flex: none; background: #f5f4fa; display: grid; grid-template-rows: repeat(7, 20px); align-content: start; padding-top: 1px; fill: #c5c5cd; }
.p { fill: #9695bb; } .q { fill: none; stroke: #9695b8; stroke-width: 3px; }
.status { display: flex; align-items: center; height: 12px; padding-left: 2px; background: #f7f7f9; }
.status .msg { margin: 0 auto 0 22%; }
.views { display: flex; height: 14px; }
.views button { width: 52px; height: 14px; }
.views svg { width: 50px; height: 12px; font-size: 7px; fill: #8aa59a; }
.views .on { background: #7b9fe2; }
.views .on text { fill: #6580ad; }

.hsplit { height: 9px; background: #e6eaf4; border-bottom: 2px solid #fff; display: flex; justify-content: center; }
.hsplit i { width: 34px; height: 6px; background: #8cc49b; }
.dockbar { flex: none; }
.docktabs, .docktools { font-family: "Liberation Sans", sans-serif; }
.docktabs { display: flex; height: 12px; gap: 7px; padding-left: 4px; background: #efeff1; }
.docktabs .on { background: #fff; }
.docktools { display: flex; align-items: center; height: 15px; background: linear-gradient(#fff, #e2e2e2); padding-left: 4px; }
.sel-none { width: 57px; } .sel-x { width: 27px; }
.diagram { height: 36px; margin: 0 3px 0 2px; background: #000; color: #a5a5a5; display: grid; place-items: center; font-size: 10px; flex: none; }
.taskbar { display: flex; height: 21px; margin-top: 3px; background: #050505; color: #e5e5e5; position: relative; flex: none; }
.taskbar button { width: 26px; height: 21px; }
.taskbar .run { border-bottom: 1px solid #d87b86; }
.taskbar .active { background: #37393b; }
.wall { position: absolute; left: 0; right: 0; top: 0; text-align: center; font: bold 18px/21px "Liberation Mono", monospace; color: #171717; pointer-events: none; }
.tray { margin-left: auto; display: flex; align-items: center; gap: 4px; padding-right: 10px; }
.up { margin: 0 1px 0 5px; } .lang { margin: 0 6px 0 4px; } .note { margin-left: 6px; }
.orb { margin-left: 2px; }
.note text { font-size: 6px; fill: #fff; }
time { text-align: center; font: 7px/9px "Liberation Sans", sans-serif; }

.dialog { position: absolute; left: 190px; top: 73px; width: 367px; border: 1px solid #c9332c; background: #f0f0f0; box-shadow: 1px 3px 6px #0008; font-family: "Liberation Sans", sans-serif; }
.dtitle { display: flex; align-items: center; height: 15px; background: #fff; padding-left: 2px; gap: 3px; font-family: "Noto Sans", sans-serif; }
.dtools { display: flex; align-items: center; height: 17px; gap: 10px; padding-left: 1px; }
.dtools button { gap: 2px; }
.roads { height: 65px; margin: 0 3px 0 2px; background: #fff; border: 1px solid #8f959f; padding-top: 1px; }
table { width: 315px; border-collapse: collapse; table-layout: fixed; }
.w64 { width: 64px; } .w53 { width: 53px; }
th, td { font-weight: normal; text-align: left; padding: 0 0 0 4px; height: 9px; line-height: 9px; white-space: nowrap; }
th { height: 12px; }
.hit { background: #d9d9d9; }
.dtabs { display: flex; height: 16px; padding: 4px 0 0 3px; }
.dtabs button { padding: 0 3px; }
.dtabs .on { background: #fff; }
.dpage { display: flex; background: #fff; margin: 0 3px; padding: 4px 6px 5px 7px; height: 104px; gap: 4px; }
fieldset { margin: 0; border: 1px solid #ddd; min-width: 0; height: 95px; }
legend { padding: 0 2px; }
.quick { width: 151px; padding: 5px 6px 0 7px; }
.stack { display: flex; flex-direction: column; gap: 2px; }
.quick button { width: 100%; height: 11px; justify-content: flex-start; padding-left: 3px; gap: 2px; background: #e3e3e3; border: 1px solid #b2b2b2; }
.upd { flex: 1; padding: 5px 8px 0 5px; }
.row { display: flex; gap: 4px; }
.row .sel { flex: 1; }
.end { align-items: flex-end; margin-top: 4px; }
.checks { width: 120px; height: 57px; border: 1px solid #8f959f; padding: 2px; display: flex; flex-direction: column; white-space: nowrap; }
.checks label { display: flex; align-items: center; height: 7px; gap: 2px; }
.checks input[type=checkbox] { width: 6px; height: 6px; border-color: #ccc; }
.go { width: 51px; height: 13px; gap: 3px; background: #e1e1e1; border: 1px solid #bbb; }
.dfoot { display: flex; justify-content: flex-end; padding: 8px 4px 4px; }
.dfoot button { width: 42px; height: 13px; background: #e1e1e1; border: 1px solid #ccc; }
```
